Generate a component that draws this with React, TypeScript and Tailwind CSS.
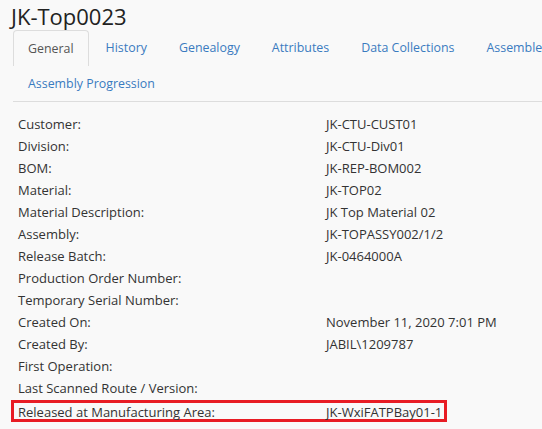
import React from "react";

const tabs = ["General", "History", "Genealogy", "Attributes", "Data Collections", "Assembled Components", "Assembly Progression"];

const rows: { label: string; value: string }[] = [
  { label: "Customer:", value: "JK-CTU-CUST01" },
  { label: "Division:", value: "JK-CTU-Div01" },
  { label: "BOM:", value: "JK-REP-BOM002" },
  { label: "Material:", value: "JK-TOP02" },
  { label: "Material Description:", value: "JK Top Material 02" },
  { label: "Assembly:", value: "JK-TOPASSY002/1/2" },
  { label: "Release Batch:", value: "JK-0464000A" },
  { label: "Production Order Number:", value: "" },
  { label: "Temporary Serial Number:", value: "" },
  { label: "Created On:", value: "November 11, 2020 7:01 PM" },
  { label: "Created By:", value: "JABIL\\1209787" },
  { label: "First Operation:", value: "" },
  { label: "Last Scanned Route / Version:", value: "" },
];

export default function App() {
  return (
    <div className="h-[429px] w-[542px] overflow-hidden bg-[#f9f9f9] text-[13px] text-[#333]" style={{ fontFamily: '"Open Sans", sans-serif' }}>
      <h1 className="h-[30px] pl-[11px] text-[22px] leading-[32px] text-[#222]">JK-Top0023</h1>

      <ul className="ml-[13px] flex w-[670px] flex-wrap border-b border-[#ddd] text-[12.4px]">
        {tabs.map((t, i) => (
          <li
            key={t}
            className={
              i === 0
                ? "-mb-px mr-[2px] flex h-[35.5px] items-center rounded-t border border-b-0 border-[#ddd] bg-[#f9f9f9] px-[14px] pt-[2px] text-[#555]"
                : "mr-[2px] flex h-[35.5px] items-center border border-transparent px-[14px] pt-[2px] text-[#3a7bc0]"
            }
          >
            {t}
          </li>
        ))}
      </ul>

      <div className="pt-[12px]">
        {rows.map((r) => (
          <div key={r.label} className="grid h-[22px] grid-cols-[308px_1fr] items-center pl-[18px]">
            <span>{r.label}</span>
            <span>{r.value}</span>
          </div>
        ))}
        <div className="ml-[11px] grid h-[22px] w-[436px] grid-cols-[308px_1fr] items-center border-[3px] border-[#e81c24] pl-[4px]">
          <span>Released at Manufacturing Area:</span>
          <span>JK-WxiFATPBay01-1</span>
        </div>
      </div>
    </div>
  );
}
